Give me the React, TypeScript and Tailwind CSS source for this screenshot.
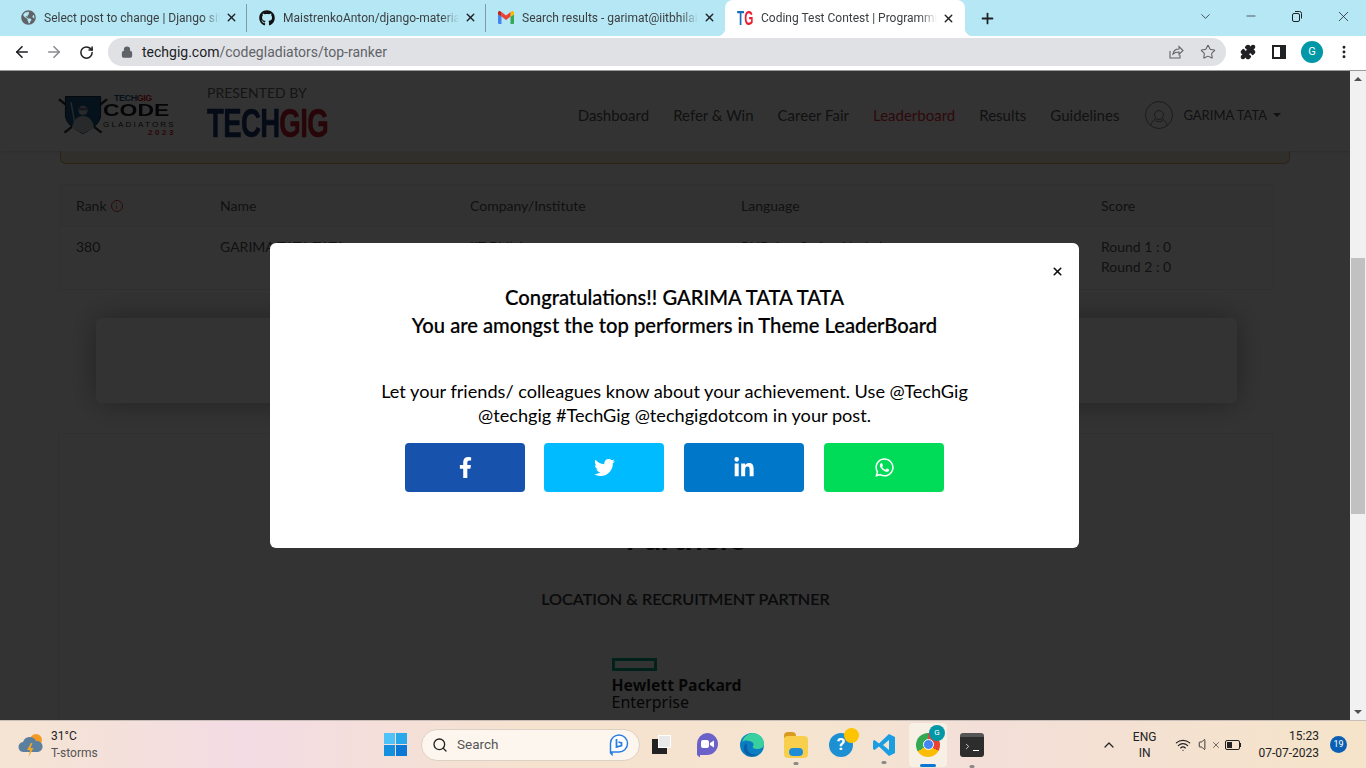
import { ArrowLeft, ArrowRight, ChevronDown, ChevronUp, Lock, Minus, Plus, RotateCw, Star, X, Search, Volume, Wifi, MoreVertical, Puzzle } from "lucide-react";
import { FaFacebookF, FaGithub, FaGlobeAmericas, FaLinkedinIn, FaTwitter, FaWhatsapp } from "react-icons/fa";

type TabProps = {
  icon: React.ReactNode;
  title: string;
  last?: boolean;
};

const TabTitle = ({ title }: { title: string }) => (
  <>
    <span className="ml-2 w-[176px] overflow-hidden whitespace-nowrap text-xs text-[#3c4043] [mask-image:linear-gradient(to_right,black_90%,transparent)]">
      {title}
    </span>
    <X size={13} strokeWidth={2.5} className="ml-[5px] text-[#202124] shrink-0" />
  </>
);

const Tab = ({ icon, title, last }: TabProps) => (
  <div className={`flex items-center w-[239px] h-[28px] pl-3 shrink-0 ${last ? "" : "border-r border-[#7f9aa3]"}`}>
    <span className="w-4 h-4 flex items-center justify-center shrink-0">{icon}</span>
    <TabTitle title={title} />
  </div>
);

const GmailIcon = () => (
  <svg width="16" height="13" viewBox="0 0 16 13">
    <path d="M0 3v9a1 1 0 0 0 1 1h2.500V5.500z" fill="#4285f4" />
    <path d="M16 3v9a1 1 0 0 1-1 1h-2.500V5.500z" fill="#34a853" />
    <path d="M12.500 1v5L16 3.400V1.600C16 .4 14.500-.4 13.500.4z" fill="#fbbc04" />
    <path d="M3.500 5.500V1L8 4.500 12.500 1v4.500L8 9z" fill="#ea4335" />
    <path d="M0 1.600v1.800l3.500 2.100V1L2.500.4C1.500-.4 0 .4 0 1.600z" fill="#c5221f" />
  </svg>
);

const BrowserChrome = () => (
  <>
    <div className="flex h-9 bg-[#b5e7f4] pl-2 font-['Roboto',sans-serif]">
      <div className="flex items-center h-9 pb-[1px]">
        <Tab icon={<FaGlobeAmericas size={15} className="text-[#5f6368]" />} title="Select post to change | Django site admin" />
        <Tab icon={<FaGithub size={16} className="text-[#111]" />} title="MaistrenkoAnton/django-material-admin" />
        <Tab icon={<GmailIcon />} title="Search results - garimat@iitbhilai.ac.in" last />
      </div>
      <div className="relative flex items-center w-[240px] h-9 pl-3 bg-white rounded-t-lg shrink-0">
        <span className="absolute left-[-8px] bottom-0 w-2 h-2 bg-[radial-gradient(circle_at_0_0,transparent_8px,white_8.500px)]" />
        <span className="absolute right-[-8px] bottom-0 w-2 h-2 bg-[radial-gradient(circle_at_100%_0,transparent_8px,white_8.500px)]" />
        <span className="w-4 h-4 shrink-0 font-['Liberation_Sans',sans-serif] font-bold text-[21px] leading-4 whitespace-nowrap origin-left scale-x-[0.56]">
          <span className="text-[#1770b8]">T</span>
          <span className="text-[#ec1c2d]">G</span>
        </span>
        <TabTitle title="Coding Test Contest | Programming Challenge" />
      </div>
      <div className="flex items-center justify-center ml-3 w-5 h-9">
        <Plus size={17} strokeWidth={2.5} className="text-[#202124]" />
      </div>
      <div className="ml-auto flex items-center h-8 text-[#202124]">
        <div className="w-[46px] flex justify-center"><ChevronDown size={15} strokeWidth={1.2} /></div>
        <div className="w-[46px] flex justify-center"><Minus size={14} strokeWidth={1.2} /></div>
        <div className="w-[46px] flex justify-center">
          <svg width="12" height="12" viewBox="0 0 12 12" fill="none" stroke="#202124">
            <rect x="1.500" y="3.500" width="7" height="8" rx="1.500" />
            <path d="M4 1.500h4.500a2 2 0 0 1 2 2v5" />
          </svg>
        </div>
        <div className="w-[46px] flex justify-center"><X size={17} strokeWidth={1.1} /></div>
      </div>
    </div>
    <div className="flex items-center h-[35px] pb-[2px] bg-white border-b border-[#9a9a9a] font-['Roboto',sans-serif]">
      <ArrowLeft size={18} strokeWidth={2.2} className="ml-[13px] text-[#202124]" />
      <ArrowRight size={18} strokeWidth={2.2} className="ml-[14px] text-[#8a8c8f]" />
      <RotateCw size={15} strokeWidth={2.4} className="ml-[16px] text-[#202124]" />
      <div className="ml-[14px] flex items-center h-7 w-[1118px] rounded-full bg-[#dfe1e5] pl-[13px] pr-[10px]">
        <Lock size={12} strokeWidth={2.5} className="text-[#5f6368] fill-[#5f6368]" />
        <span className="ml-[9px] text-sm text-[#202124]">
          techgig.com<span className="text-[#5f6368]">/codegladiators/top-ranker</span>
        </span>
        <svg className="ml-auto" width="16" height="16" viewBox="0 0 16 16" fill="none" stroke="#5f6368" strokeWidth="1.100">
          <path d="M2 7v7h10v-3" />
          <path d="M5 10c.5-3 3-5 6-5V2.500l4 4-4 4V8c-2.500 0-4.500.5-6 2z" />
        </svg>
        <Star size={16} strokeWidth={1.6} className="ml-4 text-[#5f6368]" />
      </div>
      <Puzzle size={16} strokeWidth={2} className="ml-[14px] text-[#202124] fill-[#202124]" />
      <div className="ml-[16px] w-[14px] h-[14px] border-2 border-[#202124] border-r-[6px]" />
      <div className="ml-[15px] w-[22px] h-[22px] rounded-full bg-[#0097a7] text-white text-[11px] flex items-center justify-center">
        G
      </div>
      <MoreVertical size={16} strokeWidth={2.4} className="ml-[13px] text-[#202124]" />
    </div>
  </>
);

const CodeGladiatorsLogo = () => (
  <div className="flex items-center w-[116px] h-[46px] mt-2">
    <svg width="50" height="42" viewBox="0 0 54 44" className="shrink-0">
      <path d="M1 5l46 36M53 5L7 41" stroke="#333" strokeWidth="2.500" />
      <path d="M8 2h38v20c0 9-9 15-19 20C17 37 8 31 8 22z" fill="#1c5b85" stroke="#10202c" />
      <circle cx="27" cy="17" r="5" fill="#c3ced6" />
      <path d="M22 14h10v3H22z" fill="#6d7b86" />
      <path d="M15 36c1-8 6-13 12-13s11 5 12 13l-12 6z" fill="#c3ced6" />
      <path d="M14 8l4 22" stroke="#c3ced6" strokeWidth="1.500" />
    </svg>
    <div className="flex flex-col items-start ml-[-5px] font-['Liberation_Sans',sans-serif]">
      <span className="ml-[11px] text-[9px] leading-[9px] font-bold tracking-tighter text-[#1c5b85]">
        TECH<span className="text-[#d62230]">GIG</span>
      </span>
      <span className="mt-[1px] text-[17px] leading-[14px] font-bold text-[#1a1a2c] origin-left scale-x-[1.350]">CODE</span>
      <span className="mt-[3px] text-[8px] leading-[7px] tracking-[2.200px] whitespace-nowrap text-[#1a1a2c]">GLADIATORS</span>
      <span className="self-end mt-[1px] text-[8px] leading-[8px] font-bold tracking-[2.500px] text-[#d62230]">2023</span>
    </div>
  </div>
);

const HeaderNav = () => (
  <div className="flex items-center h-[80px] bg-white shadow-sm shrink-0 pl-[58px]">
    <CodeGladiatorsLogo />
    <div className="ml-[33px] flex flex-col h-[80px] pt-[13px]">
      <span className="text-sm leading-[18px] text-[#666]">PRESENTED BY</span>
      <span className="mt-[4px] font-['Liberation_Sans',sans-serif] font-bold text-[40px] leading-[34px] tracking-[-1px] origin-left scale-x-[0.69] whitespace-nowrap text-[#16346e] [-webkit-text-stroke:0.6px]">
        TECH<span className="text-[#c01c28]">GIG</span>
      </span>
    </div>
    <nav className="ml-auto mr-[69px] mt-2 flex items-center gap-6 text-[15px] text-[#555]">
      <span>Dashboard</span>
      <span>Refer &amp; Win</span>
      <span>Career Fair</span>
      <span className="text-[#e62e3d]">Leaderboard</span>
      <span>Results</span>
      <span>Guidelines</span>
      <span className="ml-[2px] flex items-center text-[13px]">
        <svg width="28" height="28" viewBox="0 0 28 28" fill="none" stroke="#666" strokeWidth="0.800">
          <circle cx="14" cy="14" r="13.500" />
          <circle cx="14" cy="14" r="4.500" />
          <path d="M6 24c1-4 4-6 5-6M22 24c-1-4-4-6-5-6M10 19.500c2 1.500 6 1.500 8 0" />
        </svg>
        <span className="ml-[10px] mt-[1px]">GARIMA TATA</span>
        <span className="ml-[6px] w-0 h-0 border-x-4 border-x-transparent border-t-4 border-t-[#555]" />
      </span>
    </nav>
  </div>
);

const PageContent = () => (
  <div className="flex-1 min-w-0 relative overflow-hidden bg-white font-['Lato',sans-serif]">
    <div className="flex flex-col h-full">
      <HeaderNav />
      <div className="ml-[60px] w-[1230px] h-[13px] rounded-b-md border border-t-0 border-[#e0a860] bg-[#f6ead6] shrink-0" />
      <div className="mt-[20px] ml-[59px] w-[1215px] border border-[#eee] text-sm text-[#555] shrink-0">
        <div className="flex items-center h-[42px] bg-[#fafafa] border-b border-[#eee]">
          <span className="ml-4 w-[144px] flex items-center">
            Rank
            <span className="ml-1 w-3 h-3 rounded-full border border-[#e62e3d] text-[#e62e3d] text-[8px] leading-none flex items-center justify-center">i</span>
          </span>
          <span className="w-[250px]">Name</span>
          <span className="w-[271px]">Company/Institute</span>
          <span className="w-[360px]">Language</span>
          <span>Score</span>
        </div>
        <div className="flex items-start h-[62px] pt-[10px] leading-5">
          <span className="ml-4 w-[144px]">380</span>
          <span className="w-[250px]">GARIMA TATA TATA</span>
          <span className="w-[271px]">IIT Bhilai</span>
          <span className="w-[360px]">PHP, JavaScript, Node.js</span>
          <span className="flex flex-col">
            <span>Round 1 : 0</span>
            <span>Round 2 : 0</span>
          </span>
        </div>
      </div>
      <div className="mt-[28px] ml-[96px] w-[1141px] h-[85px] rounded-md bg-white shadow-[0_0_30px_rgba(0,0,0,0.35)] shrink-0" />
      <div className="mt-[30px] ml-[58px] w-[1215px] pl-10 border-t border-x border-[#eee] flex-1 flex flex-col items-center">
        <h2 className="mt-[84px] text-[32px] leading-10 font-bold text-[#333]">Partners</h2>
        <div className="mt-[19px] w-[860px] h-[44px] bg-[#fdfdfd] flex items-center justify-center text-[16.200px] font-medium text-[#333] [-webkit-text-stroke:0.2px]">
          LOCATION &amp; RECRUITMENT PARTNER
        </div>
        <div className="mt-[37px] ml-[-18px] flex flex-col w-[130px] font-['Noto_Sans',sans-serif]">
          <div className="w-[45px] h-[13px] border-[3px] border-[#01a982]" />
          <span className="mt-[6px] text-[15.800px] leading-[17px] font-bold text-[#222] whitespace-nowrap">Hewlett Packard</span>
          <span className="text-base leading-[17px] text-[#222]">Enterprise</span>
        </div>
      </div>
    </div>

    <div className="absolute inset-0 bg-black/80" />

    <div className="absolute left-[270px] top-[172px] w-[809px] h-[305px] rounded-md bg-white flex flex-col items-center text-black">
      <X size={13} strokeWidth={3} className="absolute right-[15px] top-[22px] text-[#111]" />
      <div className="mt-[40px] text-[20.200px] leading-7 font-medium text-center whitespace-nowrap [-webkit-text-stroke:0.2px]">
        <p>Congratulations!! GARIMA TATA TATA</p>
        <p>You are amongst the top performers in Theme LeaderBoard</p>
      </div>
      <div className="mt-[40px] text-[18.150px] leading-6 text-center whitespace-nowrap">
        <p>Let your friends/ colleagues know about your achievement. Use @TechGig</p>
        <p>@techgig #TechGig @techgigdotcom in your post.</p>
      </div>
      <div className="mt-[16px] flex text-white">
        <div className="w-[120px] h-[49px] rounded-sm bg-[#1753ac] flex items-center justify-center"><FaFacebookF size={21} /></div>
        <div className="ml-[19px] w-[120px] h-[49px] rounded-sm bg-[#00bbff] flex items-center justify-center"><FaTwitter size={21} /></div>
        <div className="ml-5 w-[120px] h-[49px] rounded-sm bg-[#0077c8] flex items-center justify-center"><FaLinkedinIn size={22} /></div>
        <div className="ml-5 w-[120px] h-[49px] rounded-sm bg-[#00dc58] flex items-center justify-center"><FaWhatsapp size={21} /></div>
      </div>
    </div>
  </div>
);

const Scrollbar = () => (
  <div className="w-4 bg-[#f1f1f1] flex flex-col items-center shrink-0">
    <div className="mt-[6px] w-0 h-0 border-x-4 border-x-transparent border-b-4 border-b-[#505050]" />
    <div className="mt-[177px] w-[14px] h-[256px] bg-[#c1c1c1]" />
    <div className="mt-auto mb-[6px] w-0 h-0 border-x-4 border-x-transparent border-t-4 border-t-[#505050]" />
  </div>
);

const Taskbar = () => (
  <div className="flex items-center h-12 relative border-t border-[#c8bfb8] bg-[linear-gradient(90deg,#f5e4d2_0%,#f3dce4_18%,#f5e2cf_38%,#f5e4cf_60%,#f3dfd8_72%,#f5e4c9_100%)] font-['Roboto',sans-serif] text-[#222]">
    <div className="flex items-center ml-[18px] w-[345px] shrink-0">
      <svg width="26" height="26" viewBox="0 0 26 26">
        <circle cx="18" cy="8" r="6" fill="#f59a23" />
        <path d="M6 20a5 5 0 0 1-1-10 7 7 0 0 1 13-1 5.500 5.500 0 0 1 2 11z" fill="#5b7f9f" />
        <path d="M13 11l-4 7h3l-1.500 7 5-9h-3l2-5z" fill="#f7a823" />
      </svg>
      <div className="ml-[7px] flex flex-col text-xs leading-[17px]">
        <span>31°C</span>
        <span className="text-[#555]">T-storms</span>
      </div>
    </div>
    <div className="flex items-center shrink-0">
      <div className="grid grid-cols-2 gap-[1px] w-[23px] h-[23px] ml-[21px]">
        <span className="bg-[#4fc3f7]" />
        <span className="bg-[#29a8ea]" />
        <span className="bg-[#1590df]" />
        <span className="bg-[#0a78d4]" />
      </div>
      <div className="ml-[14px] flex items-center w-[219px] h-[32px] rounded-full bg-[#fdf6ef] border border-[#ddd0c4] px-[10px]">
        <Search size={16} strokeWidth={2} className="text-[#222]" />
        <span className="ml-[9px] text-[13.500px] text-[#555]">Search</span>
        <svg className="ml-auto" width="20" height="24" viewBox="0 0 20 24" fill="none">
          <path d="M10 2a8.500 8.500 0 0 1 0 17H3v2.500L1.500 20V10A8.500 8.500 0 0 1 10 2z" fill="#fff" stroke="#2a7de1" strokeWidth="1.500" />
          <path d="M7.500 6v8l5-1.500V10L9.500 9" stroke="#2a7de1" strokeWidth="1.800" />
        </svg>
      </div>
      <div className="ml-[12px] relative w-[19px] h-[19px]">
        <div className="absolute left-0 bottom-0 w-[15px] h-[15px] bg-[#222]" />
        <div className="absolute right-0 top-0 w-[13px] h-[13px] bg-[#e9e9e9] border border-white" />
      </div>
      <svg className="ml-[24px]" width="24" height="26" viewBox="0 0 24 26">
        <path d="M12 1a11 11 0 0 1 0 22H5v2.500L2 23V12A11 11 0 0 1 12 1z" fill="#6b62c9" />
        <rect x="6" y="8" width="8" height="8" rx="2" fill="#fff" />
        <path d="M15 11l4-2.500v7L15 13z" fill="#fff" />
      </svg>
      <svg className="ml-[21px]" width="24" height="24" viewBox="0 0 24 24">
        <circle cx="12" cy="12" r="12" fill="#0b7ec2" />
        <path d="M2 9C4 3 9 0 13 0c6 0 11 5 11 11 0 3-3 5-7 5-3 0-5-1-4-3 1-1 1-3-1-4C8 7 4 7 2 9z" fill="#39d0a0" />
        <path d="M7 14c0 5 5 9 11 7-3 3-9 3-12 0-3-3-3-8 0-11 1 1 1 3 1 4z" fill="#0a5fa8" />
      </svg>
      <div className="ml-[20px] relative w-[24px] h-[26px]">
        <div className="absolute top-0 left-0 w-[12px] h-[6px] rounded-t-sm bg-[#d99a1f]" />
        <div className="absolute top-[4px] left-0 w-[24px] h-[22px] rounded-sm bg-[#f8cf4c]" />
        <div className="absolute bottom-[2px] left-[5px] w-[14px] h-[8px] rounded-sm bg-[#1f8dd6]" />
        <span className="absolute bottom-[-7px] left-1/2 -translate-x-1/2 w-[5px] h-[3px] rounded-full bg-[#8a8a8a]" />
      </div>
      <div className="ml-[21px] relative w-[24px] h-[24px] rounded-full bg-[#1c90d2] text-white text-[17px] font-bold flex items-center justify-center">
        ?
        <span className="absolute -top-[5px] -right-[6px] w-[15px] h-[15px] rounded-full bg-[#ffc400]" />
      </div>
      <div className="ml-[19px] relative w-[24px] h-[24px] flex items-center">
        <svg width="24" height="24" viewBox="0 0 24 24">
          <path d="M17 1l6 3v16l-6 3L7 13.500 2.500 17 1 16v-8l1.500-1L7 10.500z" fill="#1b9de2" />
          <path d="M17 7l-6 5 6 5z" fill="#f5e4cf" />
        </svg>
        <span className="absolute bottom-[-7px] left-1/2 -translate-x-1/2 w-[5px] h-[3px] rounded-full bg-[#8a8a8a]" />
      </div>
      <div className="ml-[13px] relative w-[38px] h-[44px] rounded bg-[#f8efe5] flex items-center justify-center">
        <div className="relative w-[24px] h-[24px] rounded-full bg-[conic-gradient(#ea4335_0_33%,#fbbc04_33%_66%,#34a853_66%)] flex items-center justify-center">
          <span className="w-[11px] h-[11px] rounded-full bg-[#4285f4] border border-white" />
        </div>
        <span className="absolute top-[2px] right-[2px] w-[16px] h-[16px] rounded-full bg-[#0097a7] text-white text-[8px] flex items-center justify-center">G</span>
        <span className="absolute bottom-0 left-1/2 -translate-x-1/2 w-[16px] h-[3px] rounded-full bg-[#0a78d4]" />
      </div>
      <div className="ml-[13px] relative w-[24px] h-[24px] rounded-[3px] bg-[#2d2d2d] border-t-4 border-[#555] flex items-center pl-[3px]">
        <ChevronUp size={9} strokeWidth={2} className="rotate-90 text-white" />
        <span className="ml-[1px] mt-[8px] w-[6px] h-[1px] bg-white" />
        <span className="absolute bottom-[-11px] left-1/2 -translate-x-1/2 w-[5px] h-[3px] rounded-full bg-[#8a8a8a]" />
      </div>
    </div>
    <div className="ml-auto flex items-center mr-[19px] text-[#222]">
      <ChevronUp size={16} strokeWidth={1.800} />
      <div className="ml-[16px] flex flex-col items-center text-xs leading-[16px]">
        <span>ENG</span>
        <span>IN</span>
      </div>
      <Wifi size={16} strokeWidth={1.800} className="ml-[19px]" />
      <span className="ml-[7px] flex items-center">
        <Volume size={15} strokeWidth={1.400} />
        <X size={10} strokeWidth={1.500} className="ml-[-2px]" />
      </span>
      <span className="ml-[4px] flex items-center">
        <span className="w-[15px] h-[10px] rounded-[2px] border border-[#222] p-[1px]">
          <span className="block w-[5px] h-full bg-[#222]" />
        </span>
        <span className="w-[1px] h-[4px] bg-[#222]" />
      </span>
      <div className="ml-[17px] flex flex-col items-end text-xs leading-[17px]">
        <span>15:23</span>
        <span>07-07-2023</span>
      </div>
      <span className="ml-[11px] w-[17px] h-[17px] rounded-full bg-[#0a5fb4] text-white text-[9px] flex items-center justify-center">19</span>
    </div>
  </div>
);

export default function App() {
  return (
    <div className="flex flex-col w-[1366px] h-[768px] overflow-hidden">
      <BrowserChrome />
      <div className="flex flex-1 min-h-0">
        <PageContent />
        <Scrollbar />
      </div>
      <Taskbar />
    </div>
  );
}
